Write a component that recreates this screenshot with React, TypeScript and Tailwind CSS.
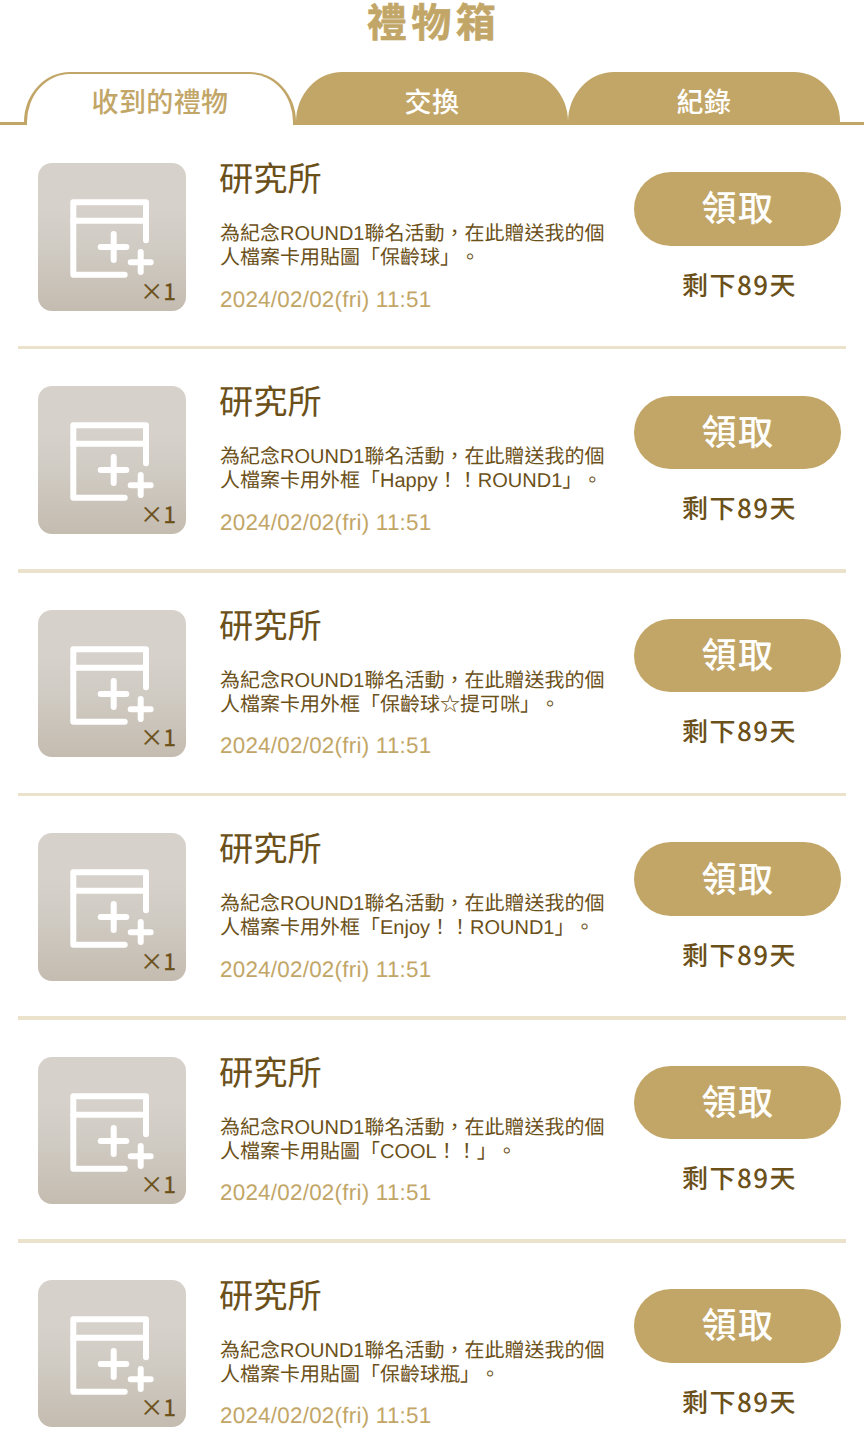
interface Gift {
  id: number;
  sender: string;
  lines: string[];
  date: string;
  daysLeft: number;
  count: number;
}

const gifts: Gift[] = [
  "貼圖「保齡球」。",
  "外框「Happy！！ROUND1」。",
  "外框「保齡球☆提可咪」。",
  "外框「Enjoy！！ROUND1」。",
  "貼圖「COOL！！」。",
  "貼圖「保齡球瓶」。"
].map((item, index) => ({
  id: index + 1,
  sender: "研究所",
  lines: ["為紀念ROUND1聯名活動，在此贈送我的個", `人檔案卡用${item}`],
  date: "2024/02/02(fri) 11:51",
  daysLeft: 89,
  count: 1
}));

function Tabs() {
  return (
    <div className="flex h-[53px] mt-[32px] text-[27px] leading-[58px] text-center tracking-[0.4px] font-medium">
      <div className="w-[25px] -mr-px border-b-[3px] border-[#c2a667]" />
      <button className="w-[272px] border-t-2 border-x-[3px] border-[#c2a667] rounded-[46px_46px_0_0/50px_50px_0_0] text-[#c2a667] leading-[53px]">
        收到的禮物
      </button>
      <div className="flex w-[544px] bg-linear-to-t from-[#c2a667] from-[3px] to-transparent to-[3px]">
        <button className="w-[272px] bg-[#c2a667] rounded-[46px_46px_0_0/50px_50px_0_0] text-white">交換</button>
        <button className="w-[272px] bg-[#c2a667] rounded-[46px_46px_0_0/50px_50px_0_0] text-white">紀錄</button>
      </div>
      <div className="w-6 border-b-[3px] border-[#c2a667]" />
    </div>
  );
}

function GiftThumbnail({ count }: { count: number }) {
  return (
    <div className="relative size-[147.5px] shrink-0 rounded-[14px] bg-linear-to-b from-[#d6d1ca] from-30% via-[#cfcac2] via-60% to-[#c5bcb0]">
      <svg viewBox="0 0 147.5 147.5" className="size-full" fill="none" stroke="white" strokeWidth="6" strokeLinecap="round" strokeLinejoin="round">
        <path d="M108 77.3V39.3H35.3V111.7H86.7" />
        <path d="M35.3 57.7H108" />
        <path d="M75.7 71V97M62.7 84H88.3" />
        <path d="M102.7 89V109M92.7 99.3H112.7" />
      </svg>
      <span className="absolute right-[9.5px] bottom-[7px] text-[23px] leading-7 text-[#6b5019] [-webkit-text-stroke:0.3px_#6b5019]">×{count}</span>
    </div>
  );
}

function GiftRow({ gift }: { gift: Gift }) {
  return (
    <li className="flex flex-col h-[223.4px] px-[18px]">
      <div className="flex flex-1 pl-5">
        <div className="pt-[37px]">
          <GiftThumbnail count={gift.count} />
        </div>
        <div className="w-[400px] shrink-0 ml-[34.5px] pt-[25px] text-[#6b5019]">
          <h2 className="-ml-px text-[34.2px] leading-[50px]">{gift.sender}</h2>
          <p className="mt-[21px] text-[20px] leading-6 whitespace-nowrap [text-spacing-trim:space-all] font-['Liberation_Sans','Noto_Sans_CJK_TC',sans-serif]">
            {gift.lines.map((line) => (
              <span key={line} className="block">
                {line}
              </span>
            ))}
          </p>
          <time className="block mt-[15.5px] text-[22.4px] leading-[28px] tracking-[0.25px] text-[#c2a667] font-['Liberation_Sans',sans-serif]">{gift.date}</time>
        </div>
        <div className="w-[207px] shrink-0 ml-[13.5px] pt-[46.2px] text-center font-medium">
          <button className="block w-full h-[73.5px] pl-[2px] rounded-full bg-[#c2a667] text-white text-[35px] leading-[68px] tracking-[1.5px]">
            <span className="block -mt-[5px]">領取</span>
          </button>
          <p className="mt-[19px] pl-[5px] text-[26px] leading-10 tracking-[1.5px] text-[#6b5019]">剩下{gift.daysLeft}天</p>
        </div>
      </div>
      <div className="h-[3.5px] w-full bg-[#ebe2cb]" />
    </li>
  );
}

export default function App() {
  return (
    <div className="w-[864px] h-[1456px] overflow-hidden bg-white [text-rendering:geometricPrecision] font-['Noto_Sans_CJK_TC',sans-serif]">
      <h1 className="h-[40px] pl-[3px] text-center text-[40px] leading-[40px] font-bold tracking-[4.5px] text-[#c2a667] [-webkit-text-stroke:0.6px_#c2a667] [stroke-linejoin:round]">禮物箱</h1>
      <Tabs />
      <ul className="mt-[1px]">
        {gifts.map((gift) => (
          <GiftRow key={gift.id} gift={gift} />
        ))}
      </ul>
    </div>
  );
}
